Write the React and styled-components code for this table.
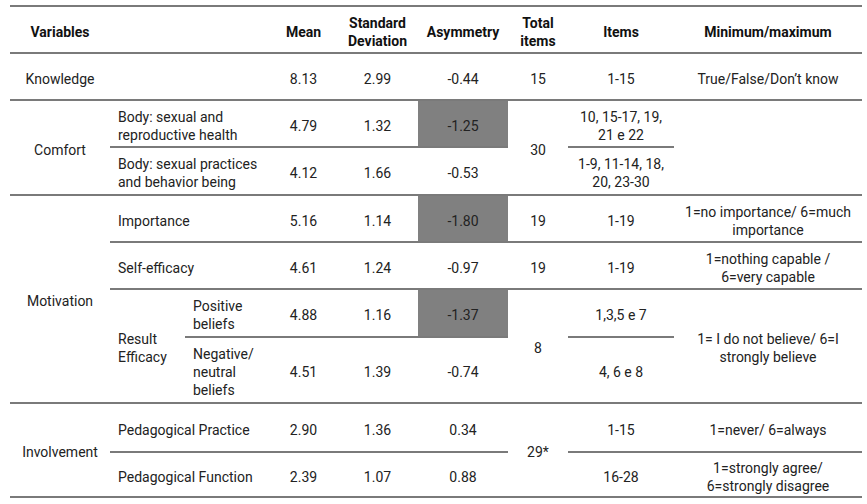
import styled, { createGlobalStyle } from "styled-components"

const GlobalStyle = createGlobalStyle`
    body {
        margin: 0;
        background: #ffffff;
        font-family: Roboto, "Noto Sans", "Liberation Sans", sans-serif;
        color: #222222;
    }
`

const Page = styled.div`
    padding: 5px 5px 0 10px;
`

const Table = styled.table`
    width: 852px;
    table-layout: fixed;
    border-collapse: collapse;
    font-size: 14px;
    line-height: 18px;
    border-top: 2px solid #7a7a7a;
`

const Head = styled.th`
    font-weight: 700;
    text-align: center;
    vertical-align: middle;
    padding: 4px 2px 0;
    border-bottom: 2px solid #7a7a7a;
    color: #111111;
`

const Cell = styled.td`
    text-align: ${props => props.left ? "left" : "center"};
    vertical-align: middle;
    padding: ${props => props.left ? "4px 4px 0 8px" : "4px 6px 0 6px"};
    border-bottom: 2px solid #7a7a7a;
    background: ${props => props.shade ? "#808080" : "transparent"};
`

const Row = styled.tr`
    height: ${props => props.h}px;
`

const cols = [100, 75, 85, 67, 81, 90, 60, 106, 188]

const App = () => {
  return (
    <Page>
        <GlobalStyle />
        <Table>
            <colgroup>
                {cols.map((w, i) => <col key={i} style={{width: w}} />)}
            </colgroup>
            <thead>
                <Row h={47}>
                    <Head>Variables</Head>
                    <Head colSpan={2}></Head>
                    <Head>Mean</Head>
                    <Head>Standard Deviation</Head>
                    <Head>Asymmetry</Head>
                    <Head>Total items</Head>
                    <Head>Items</Head>
                    <Head>Minimum/maximum</Head>
                </Row>
            </thead>
            <tbody>
                <Row h={47}>
                    <Cell>Knowledge</Cell>
                    <Cell colSpan={2}></Cell>
                    <Cell>8.13</Cell>
                    <Cell>2.99</Cell>
                    <Cell>-0.44</Cell>
                    <Cell>15</Cell>
                    <Cell>1-15</Cell>
                    <Cell>True/False/Don’t know</Cell>
                </Row>

                <Row h={47}>
                    <Cell rowSpan={2}>Comfort</Cell>
                    <Cell colSpan={2} left>Body: sexual and reproductive health</Cell>
                    <Cell>4.79</Cell>
                    <Cell>1.32</Cell>
                    <Cell shade>-1.25</Cell>
                    <Cell rowSpan={2}>30</Cell>
                    <Cell>10, 15-17, 19, 21 e 22</Cell>
                    <Cell rowSpan={2}></Cell>
                </Row>
                <Row h={48}>
                    <Cell colSpan={2} left>Body: sexual practices and behavior being</Cell>
                    <Cell>4.12</Cell>
                    <Cell>1.66</Cell>
                    <Cell>-0.53</Cell>
                    <Cell>1-9, 11-14, 18, 20, 23-30</Cell>
                </Row>

                <Row h={47}>
                    <Cell rowSpan={4}>Motivation</Cell>
                    <Cell colSpan={2} left>Importance</Cell>
                    <Cell>5.16</Cell>
                    <Cell>1.14</Cell>
                    <Cell shade>-1.80</Cell>
                    <Cell>19</Cell>
                    <Cell>1-19</Cell>
                    <Cell>1=no importance/ 6=much importance</Cell>
                </Row>
                <Row h={47}>
                    <Cell colSpan={2} left>Self-efficacy</Cell>
                    <Cell>4.61</Cell>
                    <Cell>1.24</Cell>
                    <Cell>-0.97</Cell>
                    <Cell>19</Cell>
                    <Cell>1-19</Cell>
                    <Cell>1=nothing capable /<br />6=very capable</Cell>
                </Row>
                <Row h={48}>
                    <Cell rowSpan={2} left>Result Efficacy</Cell>
                    <Cell left>Positive beliefs</Cell>
                    <Cell>4.88</Cell>
                    <Cell>1.16</Cell>
                    <Cell shade>-1.37</Cell>
                    <Cell rowSpan={2}>8</Cell>
                    <Cell>1,3,5 e 7</Cell>
                    <Cell rowSpan={2}>1= I do not believe/ 6=I strongly believe</Cell>
                </Row>
                <Row h={66}>
                    <Cell left>Negative/ neutral beliefs</Cell>
                    <Cell>4.51</Cell>
                    <Cell>1.39</Cell>
                    <Cell>-0.74</Cell>
                    <Cell>4, 6 e 8</Cell>
                </Row>

                <Row h={49}>
                    <Cell rowSpan={2}>Involvement</Cell>
                    <Cell colSpan={2} left>Pedagogical Practice</Cell>
                    <Cell>2.90</Cell>
                    <Cell>1.36</Cell>
                    <Cell>0.34</Cell>
                    <Cell rowSpan={2}>29*</Cell>
                    <Cell>1-15</Cell>
                    <Cell>1=never/ 6=always</Cell>
                </Row>
                <Row h={45}>
                    <Cell colSpan={2} left>Pedagogical Function</Cell>
                    <Cell>2.39</Cell>
                    <Cell>1.07</Cell>
                    <Cell>0.88</Cell>
                    <Cell>16-28</Cell>
                    <Cell>1=strongly agree/ 6=strongly disagree</Cell>
                </Row>
            </tbody>
        </Table>
    </Page>
  )
}

export default App
